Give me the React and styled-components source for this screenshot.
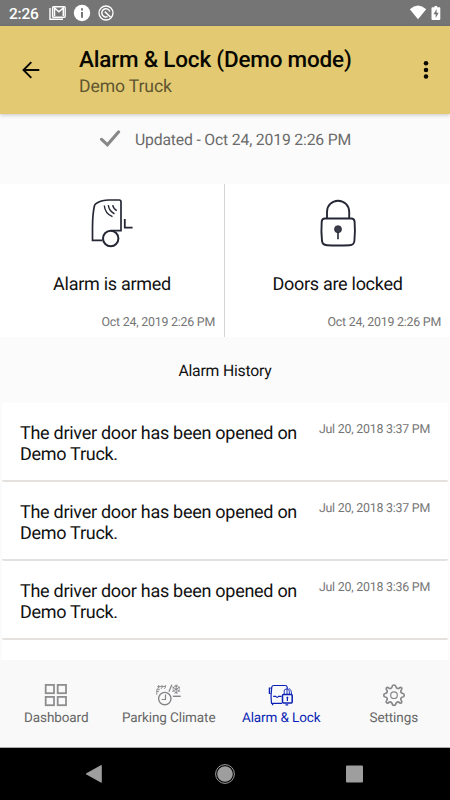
import React from "react";
import styled, { createGlobalStyle } from "styled-components";

const GlobalStyle = createGlobalStyle`
  * { box-sizing: border-box; }
  body {
    margin: 0;
    font-family: Roboto, sans-serif;
    background: #000;
    text-rendering: geometricPrecision;
  }
  svg { display: block; flex: none; }
`;

const Screen = styled.div`
  width: 450px;
  height: 800px;
  display: flex;
  flex-direction: column;
  overflow: hidden;
  background: #fbfbfb;
  color: #111;
`;

const StatusBar = styled.div`
  height: 26px;
  flex: none;
  display: flex;
  align-items: center;
  padding: 0 8px 0 9px;
  background: #757575;
  color: #fff;
`;

const Clock = styled.span`
  width: 40px;
  font-size: 15.4px;
  font-weight: 500;
  line-height: 26px;
  letter-spacing: -0.2px;
  padding-top: 1px;
`;

const Spacer = styled.div`
  flex: 1;
`;

const AppBar = styled.header`
  height: 88px;
  flex: none;
  display: flex;
  align-items: center;
  padding: 0 15px 0 22px;
  background: #e3ca72;
  box-shadow: 0 1px 4px rgba(0, 0, 0, 0.22);
  z-index: 1;
`;

const TitleBlock = styled.div`
  flex: 1;
  padding: 6px 0 0 39px;
`;

const Title = styled.h1`
  margin: 0;
  font-size: 22.5px;
  font-weight: 500;
  line-height: 27px;
  letter-spacing: -0.2px;
  color: #080700;
  white-space: nowrap;
`;

const Subtitle = styled.div`
  font-size: 17.6px;
  line-height: 26px;
  letter-spacing: -0.12px;
  color: #5f5530;
`;

const Updated = styled.div`
  height: 70px;
  flex: none;
  display: flex;
  align-items: flex-start;
  padding: 15px 0 0 100px;
  gap: 14px;
  font-size: 15.75px;
  line-height: 21px;
  letter-spacing: -0.17px;
  color: #6b6b6b;
  white-space: nowrap;
`;

const Cards = styled.div`
  height: 153px;
  flex: none;
  display: grid;
  grid-template-columns: 225px 225px;
  background: #fff;
`;

const Card = styled.section`
  display: flex;
  flex-direction: column;
  align-items: center;
  border-right: ${(p) => (p.$divided ? "1px solid #d4d4d4" : "0")};
`;

const CardLabel = styled.div`
  margin-top: 20px;
  font-size: 18px;
  line-height: 24px;
  letter-spacing: -0.28px;
`;

const CardDate = styled.div`
  align-self: flex-end;
  margin-top: 17px;
  padding-right: 9px;
  font-size: 12.4px;
  line-height: 17px;
  letter-spacing: -0.23px;
  color: #757575;
`;

const SectionTitle = styled.h2`
  height: 66px;
  flex: none;
  margin: 0;
  font-size: 15.75px;
  font-weight: 400;
  line-height: 68px;
  letter-spacing: -0.2px;
  text-align: center;
`;

const History = styled.div`
  height: 257px;
  flex: none;
  overflow: hidden;
  padding: 0 2px;
`;

const Entry = styled.article`
  height: 79px;
  display: flex;
  align-items: flex-start;
  justify-content: space-between;
  padding: 20px 18px 0;
  background: #fff;
  border-bottom: 2px solid #e4e1df;
  border-radius: 2px;
`;

const Message = styled.p`
  margin: 1px 0 0;
  width: 284px;
  font-size: 18px;
  line-height: 20.5px;
  letter-spacing: -0.28px;
`;

const EntryDate = styled.time`
  margin-top: 0;
  font-size: 12.4px;
  line-height: 14px;
  letter-spacing: -0.23px;
  color: #757575;
  white-space: nowrap;
`;

const TabBar = styled.nav`
  height: 88px;
  flex: none;
  display: grid;
  grid-template-columns: repeat(4, 1fr);
  background: #f9f9f9;
  border-bottom: 1px solid #a9acac;
`;

const Tab = styled.div`
  display: flex;
  flex-direction: column;
  align-items: center;
  padding-top: 21px;
  font-size: 13.5px;
  line-height: 18px;
  letter-spacing: -0.1px;
  white-space: nowrap;
  color: ${(p) => (p.$active ? "#0a1fb4" : "#666")};
`;

const TabLabel = styled.span`
  margin-top: 0;
`;

const SystemBar = styled.div`
  height: 52px;
  flex: none;
  display: flex;
  justify-content: space-between;
  align-items: center;
  padding: 0 83px 0 82px;
  background: #000;
`;

const StatusIcons = () => (
  <svg width="70" height="26" viewBox="0 0 70 26" fill="none">
    <path d="M1 8v11.3h13" stroke="#fff" strokeWidth="1.4" />
    <rect x="3.6" y="6.7" width="12.6" height="10.6" rx="1" stroke="#fff" strokeWidth="1.4" />
    <path d="M5.5 16V7.9l4.4 3.9 4.4-3.9V16" stroke="#fff" strokeWidth="1.5" />
    <circle cx="33" cy="13" r="8.2" fill="#fff" />
    <path d="M33 8.3v2.1M33 11.9v5.8" stroke="#757575" strokeWidth="2" />
    <circle cx="57" cy="13" r="7" stroke="#fff" strokeWidth="1.3" />
    <path d="M58.6 16.6a4.1 4.1 0 1 1 2.2-5M55.8 11.6l5.8 5.6" stroke="#fff" strokeWidth="1.5" />
  </svg>
);

const SignalIcons = () => (
  <svg width="34" height="26" viewBox="0 0 34 26">
    <path d="M1.8 9.2Q10 2 18.2 9.2L10 19.2Z" fill="#fff" />
    <path d="M26.5 6h2.6V7.3h2.4q.8 0 .8.9V19q0 1-1 1h-6.8q-1 0-1-1V8.2q0-.9.9-.9h2.1Z" fill="#fff" />
    <path d="M28.6 9.1l-3.1 5.2h2.2v3.7l3-5.3h-2.1Z" fill="#757575" />
  </svg>
);

const BackArrow = () => (
  <svg width="18" height="18" viewBox="0 0 18 18" fill="none" stroke="#080700" strokeWidth="1.9">
    <path d="M17.3 9H1.8M9.3 1.2L1.5 9l7.8 7.8" />
  </svg>
);

const MoreIcon = () => (
  <svg width="18" height="20" viewBox="0 0 18 20" fill="#080700">
    <circle cx="9" cy="3.3" r="2.25" />
    <circle cx="9" cy="10" r="2.25" />
    <circle cx="9" cy="16.6" r="2.25" />
  </svg>
);

const CheckIcon = () => (
  <svg width="21" height="20" viewBox="0 0 21 20" fill="none" stroke="#888" strokeWidth="3.2">
    <path d="M1.6 10.4l5.8 5.4L18.5 3" strokeLinecap="round" strokeLinejoin="miter" />
  </svg>
);

const TruckIcon = () => (
  <svg width="70" height="69" viewBox="-3 -1 70 69" fill="none" stroke="#252735" strokeWidth="1.7">
    <path d="M22.5 55.3H12.5V43Q12.5 29 14.5 20.5Q15 19 16.5 18.2Q22 15 29 15H39.2Q41 15 41 17V45.7H31" />
    <circle cx="30.7" cy="53.5" r="7.7" strokeWidth="2" />
    <path d="M44.8 34v8.7h7.8" strokeWidth="1.8" />
    <path d="M24.3 20.5Q25 28.7 32.5 31.7M28.3 20.2Q29 26 34.5 28.8M32.7 20.2Q33.5 24 36.8 25.7" strokeWidth="1.4" />
  </svg>
);

const LockIcon = () => (
  <svg width="70" height="69" viewBox="-2.5 -1 70 69" fill="none" stroke="#252735" strokeWidth="1.9">
    <path d="M21.5 33.5V26.8A11.1 11.1 0 0 1 43.7 26.8V33.5" />
    <path d="M19.4 33.5H45.8Q48.8 33.5 49.1 36.7Q49.9 46.5 48.9 56Q48.4 60 44.1 60.2Q32.6 60.9 21.4 60.2Q17.1 60 16.5 56Q15.5 46.5 16.2 36.7Q16.5 33.5 19.4 33.5Z" />
    <circle cx="32.5" cy="44.2" r="3.5" fill="#3a3c48" strokeWidth=".8" />
    <path d="M32.5 47v7.3" strokeWidth="1.6" />
  </svg>
);

const DashboardIcon = () => (
  <svg width="28" height="28" viewBox="0 0 28 28" fill="none" stroke="#8e8e91" strokeWidth="1.8">
    <rect x="3.7" y="3.9" width="8.3" height="8.3" />
    <rect x="15.7" y="3.9" width="8.3" height="8.3" />
    <rect x="3.7" y="15.9" width="8.3" height="8.3" />
    <rect x="15.7" y="15.9" width="8.3" height="8.3" />
  </svg>
);

const ClimateIcon = () => (
  <svg width="28" height="28" viewBox="0 0 28 28" fill="none" stroke="#858589" strokeWidth="1">
    <circle cx="9.8" cy="17.6" r="6.2" strokeWidth="1.4" />
    <path d="M10.5 13.5v5H6.7" strokeWidth="1.2" />
    <path d="M1.8 13.8V8.3H4.8M3.2 6.8l1-1.2M3.7 4v2.6l-1 1.2M7 4v2.6l-1 1.3M10.3 4v2.6l-1 1.3M2.3 5.6H11M1.9 10.6l2.3-.5" strokeWidth=".9" />
    <path d="M16.8 3.8L13.9 10.8" strokeWidth="1.2" />
    <circle cx="21.2" cy="8.2" r="3.2" strokeWidth=".7" />
    <path d="M21.2 3.6v9.2M17.2 5.9l8 4.6M25.2 5.9l-8 4.6M19.8 4l1.4 1.4L22.6 4M19.8 12.5l1.4-1.4 1.4 1.4" strokeWidth=".9" />
    <path d="M17.9 15.3h7.8" strokeWidth="1.4" />
  </svg>
);

const VehicleLockIcon = () => (
  <svg width="28" height="28" viewBox="0 0 28 28" fill="none" stroke="#0a1fb4" strokeWidth="1.2">
    <path d="M4.5 22.5Q3.5 15 4.7 6.3Q5 4.5 7 4.5H18Q20 4.5 20.2 6.3V8" />
    <path d="M3.7 7.2H2.4V12.3H3.5M4.2 22.3H15M5.6 22.5v1.7M18.5 23.8h2.7" strokeWidth="1.3" />
    <path d="M6.2 15.4h2.5l1 .9h1l.8-.9h3" strokeWidth="1.1" />
    <path d="M17.2 13.4V10Q17.2 8.2 19 8.1H20.2Q22.3 8.2 22.3 10.3V13.2M20 8.2v5M22 7.2Q24.6 8.8 24.6 13" strokeWidth=".9" />
    <rect x="15.5" y="13.5" width="9.7" height="8.5" rx="1" strokeWidth="1.5" />
    <circle cx="20.4" cy="16.6" r=".7" fill="#0a1fb4" strokeWidth=".6" />
    <path d="M20.4 17v3" />
  </svg>
);

const GearIcon = () => (
  <svg width="28" height="28" viewBox="0 0 28 28" fill="none" stroke="#88888b" strokeWidth="1.7" strokeLinejoin="round">
    <path d="M12.2 5.4Q12.5 4 14 4T15.8 5.4Q16.1 7 17.3 7.4T19.6 6.8Q20.7 6 21.5 6.7T21.5 8.7Q20.4 9.9 20.9 11.1T22.8 12.5Q24.2 12.7 24.2 14.2T22.8 16Q21.4 16.2 20.9 17.3T21.4 19.7Q22.2 20.8 21.5 21.7T19.5 21.7Q18.4 20.6 17.2 21.1T15.8 23Q15.5 24.4 14 24.4T12.2 23Q12 21.6 10.8 21.1T8.5 21.7Q7.4 22.5 6.5 21.7T6.6 19.7Q7.5 18.5 7.1 17.3T5.2 16Q3.8 15.7 3.8 14.2T5.2 12.5Q6.7 12.2 7.1 11.1T6.6 8.7Q5.8 7.5 6.5 6.7T8.5 6.8Q9.7 7.8 10.8 7.4T12.2 5.4Z" />
    <circle cx="14" cy="14.2" r="3.3" strokeWidth="1.2" />
  </svg>
);

const BackKey = () => (
  <svg width="24" height="24" viewBox="0 0 24 24" fill="#9e9e9e">
    <path d="M4.4 11.2L18.8 3.2q1-.4 1 .7v16q0 1.1-1 .7L4.4 12.5q-.9-.6 0-1.3Z" />
  </svg>
);

const HomeKey = () => (
  <svg width="24" height="24" viewBox="0 0 24 24">
    <circle cx="12" cy="12" r="9.4" fill="none" stroke="#9e9e9e" />
    <circle cx="12" cy="12" r="7.8" fill="#9e9e9e" />
  </svg>
);

const RecentKey = () => (
  <svg width="24" height="24" viewBox="0 0 24 24">
    <rect x="3" y="3.6" width="17" height="17" rx="1" fill="#9e9e9e" />
  </svg>
);

const entries = [
  "Jul 20, 2018 3:37 PM",
  "Jul 20, 2018 3:37 PM",
  "Jul 20, 2018 3:36 PM",
];

const tabs = [
  { label: "Dashboard", Icon: DashboardIcon },
  { label: "Parking Climate", Icon: ClimateIcon },
  { label: "Alarm & Lock", Icon: VehicleLockIcon, active: true },
  { label: "Settings", Icon: GearIcon },
];

export default function App() {
  return (
    <Screen>
      <GlobalStyle />
      <StatusBar>
        <Clock>2:26</Clock>
        <StatusIcons />
        <Spacer />
        <SignalIcons />
      </StatusBar>
      <AppBar>
        <BackArrow />
        <TitleBlock>
          <Title>Alarm &amp; Lock (Demo mode)</Title>
          <Subtitle>Demo Truck</Subtitle>
        </TitleBlock>
        <MoreIcon />
      </AppBar>
      <Updated>
        <CheckIcon />
        <span>Updated - Oct 24, 2019 2:26 PM</span>
      </Updated>
      <Cards>
        <Card $divided>
          <TruckIcon />
          <CardLabel>Alarm is armed</CardLabel>
          <CardDate>Oct 24, 2019 2:26 PM</CardDate>
        </Card>
        <Card>
          <LockIcon />
          <CardLabel>Doors are locked</CardLabel>
          <CardDate>Oct 24, 2019 2:26 PM</CardDate>
        </Card>
      </Cards>
      <SectionTitle>Alarm History</SectionTitle>
      <History>
        {entries.map((date, i) => (
          <Entry key={i}>
            <Message>The driver door has been opened on Demo Truck.</Message>
            <EntryDate>{date}</EntryDate>
          </Entry>
        ))}
        <Entry />
      </History>
      <TabBar>
        {tabs.map(({ label, Icon, active }) => (
          <Tab key={label} $active={active}>
            <Icon />
            <TabLabel>{label}</TabLabel>
          </Tab>
        ))}
      </TabBar>
      <SystemBar>
        <BackKey />
        <HomeKey />
        <RecentKey />
      </SystemBar>
    </Screen>
  );
}
